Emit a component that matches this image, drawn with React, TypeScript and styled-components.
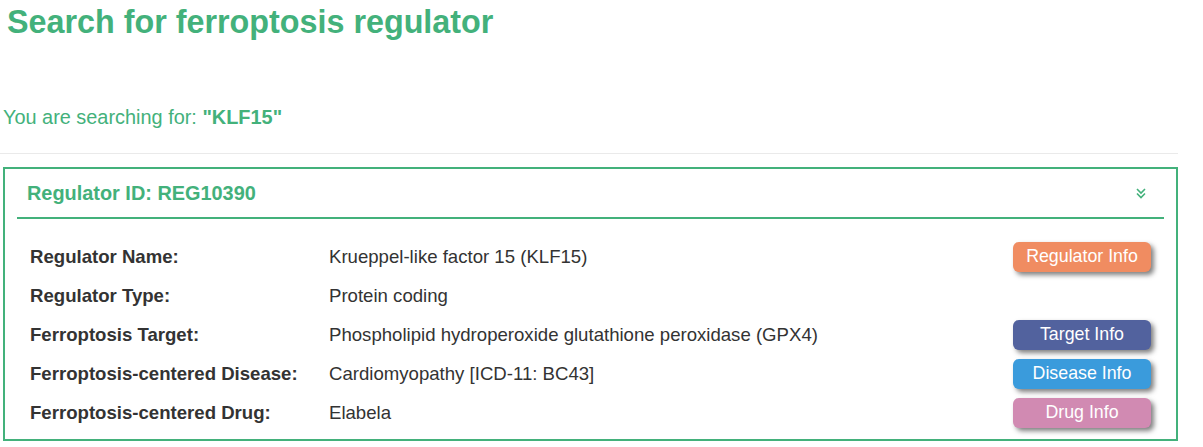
import React from "react";
import styled, { createGlobalStyle } from "styled-components";

const Global = createGlobalStyle`
  html, body { margin: 0; padding: 0; background: #fff; }
  body { font-family: "Liberation Sans", Arial, sans-serif; }
`;

const Page = styled.div`
  width: 1178px;
`;

const Title = styled.h2`
  margin: 0;
  padding: 4px 0 0 7px;
  font-size: 32.3px;
  line-height: 36px;
  font-weight: 700;
  color: #43b17b;
`;

const Searching = styled.p`
  margin: 65px 0 0 0;
  padding-left: 3px;
  font-size: 19.9px;
  line-height: 24px;
  color: #43b17b;
  strong { font-weight: 700; }
`;

const Rule = styled.hr`
  margin: 24px 0 0 0;
  border: 0;
  border-top: 1px solid #eaeaea;
`;

const Panel = styled.section`
  margin: 13px 0 0 3px;
  border: 2px solid #43b17b;
  padding: 0 12px 7px 12px;
`;

const PanelHeader = styled.div`
  display: flex;
  align-items: center;
  justify-content: space-between;
  height: 48px;
  padding: 0 17px 0 10px;
  border-bottom: 2px solid #43b17b;
`;

const PanelTitle = styled.h4`
  margin: 0;
  font-size: 19.9px;
  font-weight: 700;
  color: #43b17b;
`;

const Body = styled.div`
  padding: 18px 0 0 13px;
  display: flex;
  flex-direction: column;
`;

const Row = styled.div`
  display: grid;
  grid-template-columns: 299px 1fr 138px;
  align-items: center;
  height: 39px;
  padding-right: 13px;
`;

const Label = styled.div`
  font-size: 18.6px;
  font-weight: 700;
  color: #333;
`;

const Value = styled.div`
  font-size: 18.6px;
  color: #333;
`;

const InfoButton = styled.button<{ $bg: string }>`
  display: block;
  width: 138px;
  height: 30px;
  border: 0;
  border-radius: 6px;
  background: ${(p) => p.$bg};
  color: #fff;
  font-family: "Liberation Sans", Arial, sans-serif;
  font-size: 17.8px;
  box-shadow: 3px 3px 5px rgba(0, 0, 0, 0.5);
  cursor: pointer;
  padding: 0;
`;

const Chevron = () => (
  <svg width="12" height="13" viewBox="0 0 12 13" fill="none" stroke="#43b17b" strokeWidth="1.6">
    <polyline points="2,2 6,6 10,2" />
    <polyline points="2,6.5 6,10.5 10,6.5" />
  </svg>
);

const rows: { label: string; value: string; button?: { text: string; bg: string } }[] = [
  { label: "Regulator Name:", value: "Krueppel-like factor 15 (KLF15)", button: { text: "Regulator Info", bg: "#f08c61" } },
  { label: "Regulator Type:", value: "Protein coding" },
  { label: "Ferroptosis Target:", value: "Phospholipid hydroperoxide glutathione peroxidase (GPX4)", button: { text: "Target Info", bg: "#52629e" } },
  { label: "Ferroptosis-centered Disease:", value: "Cardiomyopathy [ICD-11: BC43]", button: { text: "Disease Info", bg: "#3a9bdc" } },
  { label: "Ferroptosis-centered Drug:", value: "Elabela", button: { text: "Drug Info", bg: "#d18ab2" } },
];

export default function App() {
  return (
    <Page>
      <Global />
      <Title>Search for ferroptosis regulator</Title>
      <Searching>
        You are searching for: <strong>"KLF15"</strong>
      </Searching>
      <Rule />
      <Panel>
        <PanelHeader>
          <PanelTitle>Regulator ID: REG10390</PanelTitle>
          <Chevron />
        </PanelHeader>
        <Body>
          {rows.map((r) => (
            <Row key={r.label}>
              <Label>{r.label}</Label>
              <Value>{r.value}</Value>
              <div>{r.button && <InfoButton $bg={r.button.bg}>{r.button.text}</InfoButton>}</div>
            </Row>
          ))}
        </Body>
      </Panel>
    </Page>
  );
}
